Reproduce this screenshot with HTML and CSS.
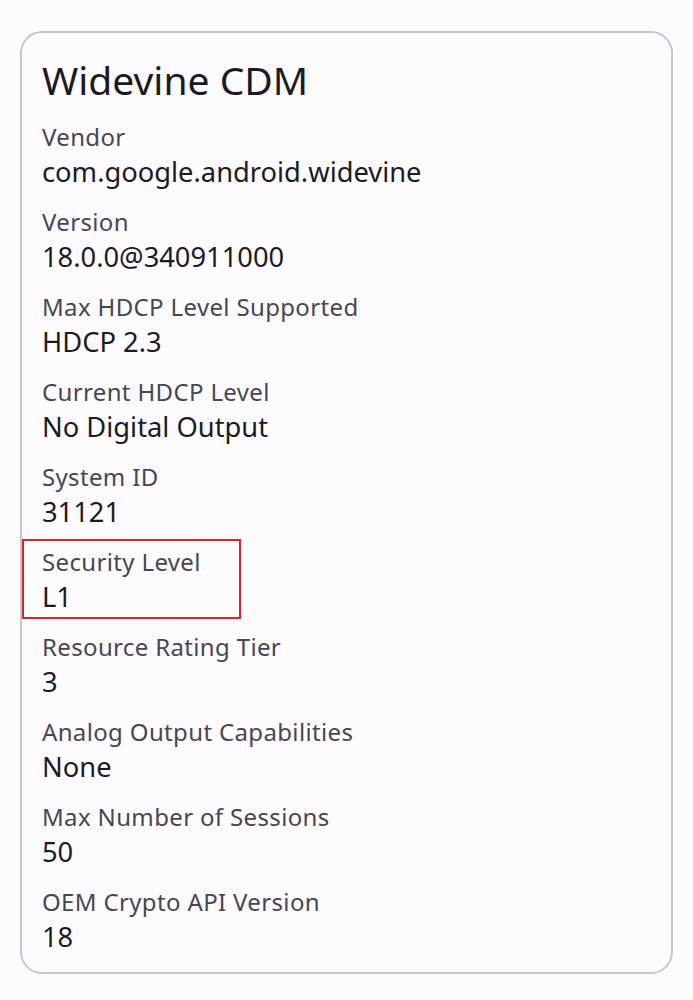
FILE: index.html
```html
<!DOCTYPE html>
<html>
<head>
<meta charset="utf-8">
<link rel="stylesheet" href="styles.css">
</head>
<body>
<div class="card">
  <h1 class="title">Widevine CDM</h1>
  <div class="row"><div class="label">Vendor</div><div class="value">com.google.android.widevine</div></div>
  <div class="row"><div class="label">Version</div><div class="value">18.0.0@340911000</div></div>
  <div class="row"><div class="label">Max HDCP Level Supported</div><div class="value">HDCP 2.3</div></div>
  <div class="row"><div class="label">Current HDCP Level</div><div class="value">No Digital Output</div></div>
  <div class="row"><div class="label">System ID</div><div class="value">31121</div></div>
  <div class="row highlight"><div class="label">Security Level</div><div class="value">L1</div></div>
  <div class="row"><div class="label">Resource Rating Tier</div><div class="value">3</div></div>
  <div class="row"><div class="label">Analog Output Capabilities</div><div class="value">None</div></div>
  <div class="row"><div class="label">Max Number of Sessions</div><div class="value">50</div></div>
  <div class="row"><div class="label">OEM Crypto API Version</div><div class="value">18</div></div>
</div>
</body>
</html>
```
FILE: styles.css
```css
html, body {
  margin: 0;
  padding: 0;
  background: #fcfbff;
}
body {
  font-family: "Noto Sans", "Open Sans", sans-serif;
  padding: 31px 20px 0 20px;
}
.card {
  border: 2px solid #c7c6cc;
  border-radius: 22px;
  background: #fdfbff;
  height: 943px;
  box-sizing: border-box;
  display: flex;
  flex-direction: column;
  padding-top: 23px;
}
.title {
  margin: 0 0 10px 0;
  padding: 0 20px;
  font-weight: 385;
  font-size: 39px;
  line-height: 48px;
  color: #1b1b1f;
}
.row {
  display: flex;
  flex-direction: column;
  padding: 5px 20px;
  margin-bottom: 5px;
  white-space: nowrap;
}
.label {
  font-size: 24px;
  font-weight: 385;
  line-height: 35px;
  color: #46474f;
  letter-spacing: 0.35px;
}
.value {
  font-size: 27.3px;
  font-weight: 385;
  line-height: 35px;
  color: #1b1b1f;
}
.highlight {
  align-self: flex-start;
  width: 219px;
  box-sizing: border-box;
  box-shadow: inset 0 0 0 2px #d8242b;
}
```
